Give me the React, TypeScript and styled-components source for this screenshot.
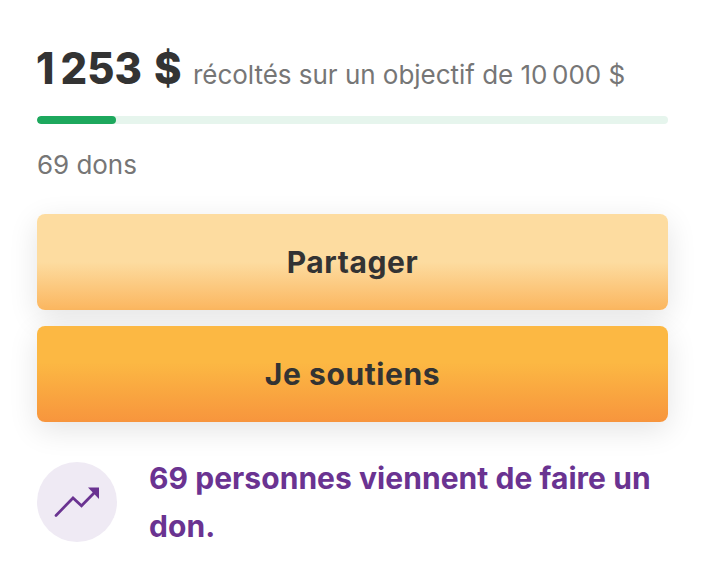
import React from "react";
import styled, { createGlobalStyle } from "styled-components";

const GlobalStyle = createGlobalStyle`
  * { box-sizing: border-box; }
  body {
    margin: 0;
    background: #fff;
    font-family: Inter, "Liberation Sans", sans-serif;
  }
`;

const Widget = styled.main`
  width: 714px;
  height: 574px;
  padding: 44px 46px 0 37px;
  overflow: hidden;
  background: #fff;
`;

const Totals = styled.h2`
  display: flex;
  align-items: baseline;
  height: 72px;
  margin: 0;
  line-height: 48px;
  white-space: nowrap;
`;

const Raised = styled.span`
  width: 157px;
  margin-left: -1px;
  color: #333;
  font-size: 43.5px;
  font-weight: 800;
  letter-spacing: -2.3px;
  word-spacing: 3px;
  transform: scaleX(0.96);
  transform-origin: left;
`;

const Goal = styled.span`
  color: #767676;
  font-size: 26px;
  font-weight: 400;
  letter-spacing: -0.03px;
`;

const Track = styled.div`
  height: 8px;
  overflow: hidden;
  border-radius: 4px;
  background: #e6f5ed;
`;

const Fill = styled.div`
  height: 100%;
  border-radius: 4px;
  background: #1da85d;
`;

const Count = styled.p`
  height: 48px;
  margin: 17px 0 25px;
  color: #767676;
  font-size: 26px;
  letter-spacing: -0.05px;
  line-height: 48px;
`;

const Actions = styled.div`
  display: grid;
  gap: 16px;
`;

const Button = styled.button<{ $tone: "light" | "strong" }>`
  height: 96px;
  padding: 0;
  border: 0;
  border-radius: 8px;
  color: #333;
  background: ${({ $tone }) =>
    $tone === "light"
      ? "linear-gradient(#fddca0 0%, #fddca0 50%, #fbb65f 100%)"
      : "linear-gradient(#fcb843 0%, #fcb843 38%, #f7953d 100%)"};
  box-shadow: 0 8px 30px rgba(0, 0, 0, 0.11);
  font-family: inherit;
  font-size: 30px;
  font-weight: 700;
  letter-spacing: 0.6px;
  line-height: 96px;
`;

const Activity = styled.section`
  display: flex;
  align-items: center;
  gap: 32px;
  margin-top: 32px;
`;

const Badge = styled.div`
  flex: none;
  width: 80px;
  height: 80px;
  border-radius: 50%;
  background: #efeaf4;
`;

const Message = styled.p`
  margin: 0;
  color: #6a3391;
  font-size: 30px;
  font-weight: 700;
  letter-spacing: 0.05px;
  line-height: 48px;
  white-space: nowrap;
`;

const raised = 1253;
const goal = 10000;

export default function App() {
  return (
    <>
      <GlobalStyle />
      <Widget>
        <Totals>
          <Raised>{"1\u202f253 $"}</Raised>
          <Goal>{"récoltés sur un objectif de 10\u202f000 $"}</Goal>
        </Totals>
        <Track>
          <Fill style={{ width: `${(raised / goal) * 100}%` }} />
        </Track>
        <Count>69 dons</Count>
        <Actions>
          <Button $tone="light">Partager</Button>
          <Button $tone="strong">Je soutiens</Button>
        </Actions>
        <Activity>
          <Badge>
            <svg width="80" height="80" viewBox="0 0 80 80" fill="none" aria-hidden="true">
              <path d="M19 53.5 36 36l8.5 7.8L58 30" stroke="#6a3391" strokeWidth="2.7" strokeLinecap="round" />
              <path d="M51 25.5h11V37Z" fill="#6a3391" />
            </svg>
          </Badge>
          <Message>
            69 personnes viennent de faire un
            <br />
            don.
          </Message>
        </Activity>
      </Widget>
    </>
  );
}
